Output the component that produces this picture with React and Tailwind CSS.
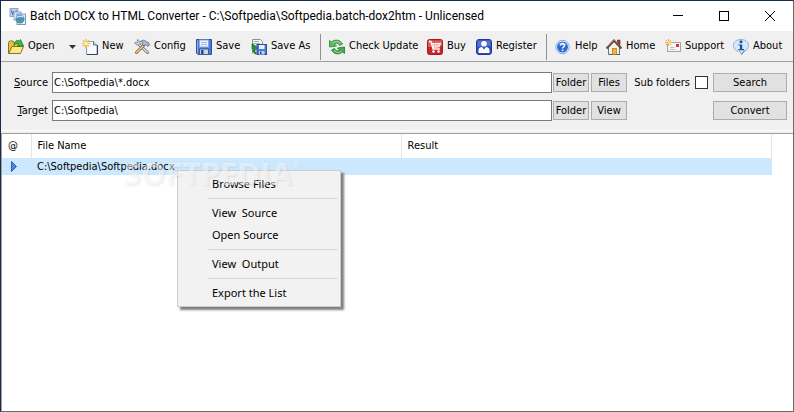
import clsx from "clsx";

function AppIcon() {
  return (
    <svg width="17" height="17" viewBox="0 0 17 17" aria-hidden="true">
      <rect x="1" y="0.5" width="8" height="8" fill="#b9c9ea" stroke="#8fa6d4" />
      <path d="M2.500 2.500l1 4 1.500-3 1.500 3 1-4" fill="none" stroke="#4261ae" />
      <rect x="5" y="4" width="7" height="8" fill="#dfe8f6" stroke="#93a7c8" />
      <rect x="8" y="6" width="8.500" height="10.500" fill="#e9f1f8" stroke="#7f98b9" />
      <circle cx="11" cy="11" r="4.500" fill="#4f8bc9" />
      <path d="M7.500 9.500c3-2 5-1 7-1" fill="none" stroke="#c5e6ed" strokeWidth="1.500" />
      <path d="M8 12.500c2-1 4 0 6 0-1 3-5 3-6 0z" fill="#55a365" />
    </svg>
  );
}

function OpenIcon() {
  return (
    <svg width="16" height="16" viewBox="0 0 16 16" aria-hidden="true">
      <path d="M.5 14.500v-11l1-1.500H5l1.500 2h7v4" fill="#e3c43f" stroke="#8b7326" />
      <path d="M.8 14.500L4 7.500h11.500L12.500 14.500z" fill="#f8e887" stroke="#8b7326" />
      <path d="M6 6.500c0-4 2.500-6 5.500-4.500l1-1.500 3 6.500-6 0 1-2c-2-1-3.500-.5-4.500 1.500z" fill="#46b53c" stroke="#21802a" strokeWidth=".8" />
    </svg>
  );
}

function NewIcon() {
  return (
    <svg width="16" height="16" viewBox="0 0 16 16" aria-hidden="true">
      <path d="M4.500 2.500h7l3.500 3.500v9.500H4.500z" fill="#f7faff" stroke="#8c9bbb" />
      <path d="M15.500 6v9.500H5" fill="none" stroke="#30415e" />
      <path d="M11.500 2.500V6H15" fill="#d4dff0" stroke="#5b6f92" />
      <path d="M4 0v9M0 4.500h8.500M1 1.500l6 6M7 1.500l-6 6" stroke="#e6b94a" strokeWidth="1.200" />
      <circle cx="4" cy="4.500" r="2" fill="#fff2a0" />
    </svg>
  );
}

function ConfigIcon() {
  return (
    <svg width="16" height="16" viewBox="0 0 16 16" aria-hidden="true">
      <path d="M4 4.500l9.500 9" stroke="#5b6878" strokeWidth="3" strokeLinecap="round" />
      <path d="M4 4.500l9.500 9" stroke="#e3e9f0" strokeWidth="1.400" strokeLinecap="round" />
      <path d="M.8 3.500l2.200.5 1-1-1-2.200c2 0 3.500 1.700 2.800 3.700C5 6.500 1.500 6.500.8 3.500z" fill="#dce4ec" stroke="#66778a" strokeWidth=".8" />
      <path d="M9.500 6.500L2.500 13.500" stroke="#835f36" strokeWidth="3" strokeLinecap="round" />
      <path d="M9.500 6.500L2.500 13.500" stroke="#f0cc96" strokeWidth="1.400" strokeLinecap="round" />
      <path d="M6.500 2.500C9 .5 11 1 12.500 3l2 .5 1 2.500-2 1.500-1.500-2-2 1.500-2-2 1-1.500z" fill="#aebccc" stroke="#4e6176" strokeWidth=".8" />
    </svg>
  );
}

function SaveIcon() {
  return (
    <svg width="16" height="16" viewBox="0 0 16 16" aria-hidden="true">
      <path d="M.5 .5h15v15H2l-1.500-1.500z" fill="#4c7bd2" stroke="#2c4da1" />
      <path d="M1.500 1.500v12" stroke="#8bb0ef" />
      <rect x="3.500" y="1" width="9" height="7" fill="#edf3fc" stroke="#8babdd" />
      <path d="M5 3.500h6M5 5.500h6" stroke="#a8badb" />
      <rect x="3.500" y="10" width="9" height="5.500" fill="#c9d4e5" stroke="#3c5c9d" />
      <rect x="5" y="11" width="2.500" height="4" fill="#294b8d" />
    </svg>
  );
}

function SaveAsIcon() {
  return (
    <svg width="16" height="16" viewBox="0 0 16 16" aria-hidden="true">
      <path d="M1.500 .5h8l2 2V14h-10z" fill="#f1f4f1" stroke="#8a938b" />
      <path d="M3 2.500h5M3 4.500h6" stroke="#a9b1aa" />
      <path d="M1 5v5h2v2.500l3.500-3.500L3.500 6v2H2.500V5z" fill="#2f963c" stroke="#176b28" strokeWidth=".7" />
      <path d="M2 11l3 4" stroke="#176b28" strokeWidth="1.500" />
      <rect x="6" y="5.500" width="9.500" height="10" fill="#4c7bd2" stroke="#2c4da1" />
      <rect x="8" y="6" width="5.500" height="4" fill="#eaf1fc" />
      <rect x="8" y="12" width="5.500" height="3.500" fill="#c4d0e5" />
      <rect x="9" y="12.500" width="1.500" height="2.500" fill="#294b8d" />
    </svg>
  );
}

function UpdateIcon() {
  return (
    <svg width="16" height="16" viewBox="0 0 16 16" aria-hidden="true">
      <path d="M.5 1.500l2 1.500C6 0 11 .5 13.500 5l-3 1.500C9.500 4 7.500 3.500 5.500 5l2 2-7 1z" fill="#5ebd58" stroke="#27883b" strokeWidth=".8" />
      <path d="M15.500 14.500l-2-1.500C10 16 5 15.500 2.500 11l3-1.500c1 2.500 3 3 5 1.500l-2-2 7-1z" fill="#48aa4b" stroke="#1e7a32" strokeWidth=".8" />
      <path d="M3.500 4C6 2 9.500 2 11.500 4.500M5 11.500c2.500 2.500 5 2.500 7.500.5" fill="none" stroke="#a8e39a" />
    </svg>
  );
}

function BuyIcon() {
  return (
    <svg width="16" height="16" viewBox="0 0 16 16" aria-hidden="true">
      <rect x=".5" y=".5" width="15" height="15" rx="2" fill="#c92527" stroke="#a11a20" />
      <path d="M1 1.500h14V7L1 8z" fill="#df625b" />
      <path d="M2 2.500h2L6 10h7" fill="none" stroke="#fff" strokeWidth="1.300" />
      <path d="M4.500 4h9.500l-1.500 4.500-7 .5z" fill="#fff" />
      <path d="M5 5.500h8M5.500 7h7M7.500 4v5M10 4v5" stroke="#e39a98" strokeWidth=".6" />
      <circle cx="6.500" cy="12.500" r="1.300" fill="#fff" />
      <circle cx="11.500" cy="12.500" r="1.300" fill="#fff" />
    </svg>
  );
}

function RegisterIcon() {
  return (
    <svg width="16" height="16" viewBox="0 0 16 16" aria-hidden="true">
      <rect x=".5" y=".5" width="15" height="15" rx="2.500" fill="#2c48ba" stroke="#243996" />
      <path d="M1.500 1.500h13V7l-13 1z" fill="#5572d8" />
      <circle cx="8" cy="4.800" r="2.800" fill="#fff" />
      <path d="M2.500 14V11c0-2 2-3 3.500-3l2 2.500L10 8c1.500 0 3.500 1 3.500 3v3z" fill="#fff" />
    </svg>
  );
}

function HelpIcon() {
  return (
    <svg width="16" height="16" viewBox="0 0 16 16" aria-hidden="true">
      <circle cx="7.500" cy="8" r="6.700" fill="#fff" stroke="#7fa6d9" />
      <circle cx="7.500" cy="8" r="5.500" fill="#2c6bd0" />
      <path d="M3.500 6c1-3 6-3.500 8 0z" fill="#6e9eeb" />
      <path d="M5.500 6.500c0-2.500 4-2.500 4 0 0 1.500-2 1.500-2 3" fill="none" stroke="#fff" strokeWidth="1.500" />
      <rect x="6.800" y="10.500" width="1.500" height="1.500" fill="#fff" />
    </svg>
  );
}

function HomeIcon() {
  return (
    <svg width="16" height="16" viewBox="0 0 16 16" aria-hidden="true">
      <path d="M11.500 1h2.500v6h-2.500z" fill="#9d3e2a" stroke="#70291f" strokeWidth=".6" />
      <path d="M2.500 8v7.500h11V8L8 2.500z" fill="#f5f3ea" stroke="#6d7078" />
      <path d="M.5 9.500L8 1.500l7.500 8" fill="none" stroke="#5d4a3e" strokeWidth="2" />
      <path d="M1.500 7.500L8 .8l6 6" fill="none" stroke="#b98d59" strokeWidth=".7" />
      <rect x="6.500" y="9.500" width="4" height="6" fill="#edb92f" stroke="#a97519" strokeWidth=".7" />
      <path d="M3 15.500h3M11 15.500h3" stroke="#4e5360" />
    </svg>
  );
}

function SupportIcon() {
  return (
    <svg width="16" height="16" viewBox="0 0 16 16" aria-hidden="true">
      <rect x="2.500" y="3.500" width="13" height="9" fill="#f6f6f6" stroke="#a4a5a8" />
      <path d="M5 8.500h4.500M5 10.500h5" stroke="#bfc2c8" />
      <rect x="11" y="5" width="3" height="3" fill="#cf3b34" />
      <path d="M3.500 0v7M0 3.500h7.500M1 1l5 5M6 1L1 6" stroke="#e7a936" />
      <circle cx="3.600" cy="3.500" r="1.800" fill="#fadb66" />
    </svg>
  );
}

function AboutIcon() {
  return (
    <svg width="16" height="16" viewBox="0 0 16 16" aria-hidden="true">
      <path d="M8 .5c4.500 0 7.500 2.500 7.500 6 0 3-2 5-5 5.800L8.500 15.500 7 12.500C3 12 .5 10 .5 6.500S3.500.5 8 .5z" fill="#d6e8fa" stroke="#94adca" />
      <path d="M12 11.500l-3.500 4" stroke="#6581a5" />
      <circle cx="8" cy="2.800" r="1.500" fill="#174f9e" />
      <path d="M5.500 5.500h3.700V10H11v1.200H5.500V10H7V6.500H5.500z" fill="#174f9e" />
    </svg>
  );
}

const TOOLBAR = [
  { label: "Open", icon: OpenIcon, width: "w-[74px]", dropdown: true },
  { label: "New", icon: NewIcon, width: "w-[52px]" },
  { label: "Config", icon: ConfigIcon, width: "w-[62px]" },
  { label: "Save", icon: SaveIcon, width: "w-[55px]" },
  { label: "Save As", icon: SaveAsIcon, width: "w-[69px]" },
  { label: "Check Update", icon: UpdateIcon, width: "w-[98px]", divider: true },
  { label: "Buy", icon: BuyIcon, width: "w-[49px]" },
  { label: "Register", icon: RegisterIcon, width: "w-[70px]" },
  { label: "Help", icon: HelpIcon, width: "w-[51px]", divider: true },
  { label: "Home", icon: HomeIcon, width: "w-[59px]" },
  { label: "Support", icon: SupportIcon, width: "w-[68px]" },
  { label: "About", icon: AboutIcon, width: "w-[52px]" },
];

const MENU_GROUPS = [
  ["Browse Files"],
  ["View  Source", "Open Source"],
  ["View  Output"],
  ["Export the List"],
];

function TitleBar() {
  return (
    <header className="flex h-[30px] items-center bg-white pl-2 font-['Roboto',sans-serif] text-[12px]">
      <AppIcon />
      <h1 className="ml-1 flex-1 whitespace-nowrap">
        Batch DOCX to HTML Converter - C:\Softpedia\Softpedia.batch-dox2htm - Unlicensed
      </h1>
      <button aria-label="Minimize" className="flex w-[46px] justify-center">
        <svg width="10" height="10" viewBox="0 0 10 10"><path d="M0 4.500h10" stroke="#000" /></svg>
      </button>
      <button aria-label="Maximize" className="flex w-[46px] justify-center">
        <svg width="10" height="10" viewBox="0 0 10 10"><rect x=".5" y=".5" width="9" height="9" fill="none" stroke="#000" /></svg>
      </button>
      <button aria-label="Close" className="flex w-[46px] justify-center">
        <svg width="10" height="10" viewBox="0 0 10 10"><path d="M0 0l10 10M10 0L0 10" stroke="#000" /></svg>
      </button>
    </header>
  );
}

function Toolbar() {
  return (
    <nav className="flex h-[31px] items-center border-b border-[#a0a0a0] pl-[7px] pt-px">
      {TOOLBAR.map(({ label, icon: Icon, width, dropdown, divider }) => (
        <div key={label} className="flex items-center">
          {divider && <span className="mr-2 h-[26px] w-px bg-[#909090]" />}
          <button className={clsx("flex shrink-0 items-center gap-1 whitespace-nowrap", width)}>
            <Icon />
            {label}
            {dropdown && (
              <svg className="ml-auto mr-[6px]" width="7" height="4" viewBox="0 0 7 4"><path d="M0 0h7L3.500 4z" fill="#333" /></svg>
            )}
          </button>
        </div>
      ))}
    </nav>
  );
}

function FormButton({ children, className }) {
  return (
    <button className={clsx("h-[19px] shrink-0 border border-[#adadad] bg-[#e1e1e1] leading-none", className)}>
      {children}
    </button>
  );
}

function PathRow({ id, label, value, second, action, children }) {
  return (
    <div className="flex h-[21px] items-center">
      <label htmlFor={id} className="w-[47px] shrink-0 pt-px text-right">
        <span className="underline">{label[0]}</span>{label.slice(1)}
      </label>
      <input
        id={id}
        defaultValue={value}
        className="ml-1 mr-px h-full min-w-0 flex-1 border border-[#7a7a7a] bg-white px-px outline-none"
      />
      <FormButton className="w-[36px]">Folder</FormButton>
      <FormButton className="ml-[2px] w-[36px]">{second}</FormButton>
      <div className="flex w-[86px] shrink-0 items-center justify-end pr-[5px]">{children}</div>
      <FormButton className="w-[74px]">{action}</FormButton>
    </div>
  );
}

function FileTable() {
  return (
    <table className="w-[770px] table-fixed text-left">
      <thead>
        <tr className="h-6">
          <th className="w-[29px] border-r border-[#e5e5e5] pl-[6px] font-normal">@</th>
          <th className="w-[370px] border-r border-[#e5e5e5] pl-[6px] font-normal">File Name</th>
          <th className="border-r border-[#e5e5e5] pl-[6px] font-normal">Result</th>
        </tr>
      </thead>
      <tbody>
        <tr className="h-[17px] bg-[#cce8ff]">
          <td className="pl-[9px]">
            <svg width="6" height="11" viewBox="0 0 6 11"><path d="M.5 .5l5 5-5 5z" fill="#4e87dc" stroke="#2b5cb3" /></svg>
          </td>
          <td className="pl-[6px] pt-px leading-[16px]">C:\Softpedia\Softpedia.docx</td>
          <td />
        </tr>
      </tbody>
    </table>
  );
}

function ContextMenu() {
  return (
    <div
      role="menu"
      className="absolute left-[175px] top-[36px] w-[164px] border border-[#ccc] bg-[#f2f2f2] py-[2px] font-['Noto_Sans','Open_Sans',sans-serif] text-[11px] shadow-[3px_3px_2px_rgba(0,0,0,0.5)]"
    >
      {MENU_GROUPS.map((group, i) => (
        <div key={group[0]}>
          {i > 0 && <div className="my-[3px] ml-[30px] mr-[2px] h-px bg-[#d7d7d7]" />}
          {group.map((item) => (
            <button key={item} role="menuitem" className="block h-[22px] w-full whitespace-pre pl-[34px] text-left">
              {item}
            </button>
          ))}
        </div>
      ))}
    </div>
  );
}

export default function App() {
  return (
    <div className="flex min-h-screen flex-col border border-b-[#6b6b6b] border-l-[#1b2b45] border-r-[#6b6b6b] border-t-[#172f50] bg-[#f0f0f0] font-['DejaVu_Sans_Condensed',sans-serif] text-[11px] text-black">
      <TitleBar />
      <Toolbar />
      <form className="flex flex-col gap-[7px] border-b border-white pb-[9px] pr-[6px] pt-[10px]" onSubmit={(e) => e.preventDefault()}>
        <PathRow id="source" label="Source" value="C:\Softpedia\*.docx" second="Files" action="Search">
          <label htmlFor="sub" className="mr-[5px] whitespace-nowrap pt-px">Sub folders</label>
          <input id="sub" type="checkbox" className="size-[13px] appearance-none border border-[#333] bg-white" />
        </PathRow>
        <PathRow id="target" label="Target" value="C:\Softpedia\" second="View" action="Convert" />
      </form>
      <main className="relative mt-[2px] flex-1 border-l border-t border-[#a0a0a0] bg-white">
        <FileTable />
        <ContextMenu />
        <div className="pointer-events-none absolute left-[122px] top-[23px] flex font-['Open_Sans',sans-serif] text-[31px] font-bold leading-[32px] text-white/50 [text-shadow:1px_1px_2px_rgba(0,0,0,0.08)]">
          SOFTPEDIA<span className="text-[10px] leading-[14px]">®</span>
        </div>
      </main>
    </div>
  );
}
